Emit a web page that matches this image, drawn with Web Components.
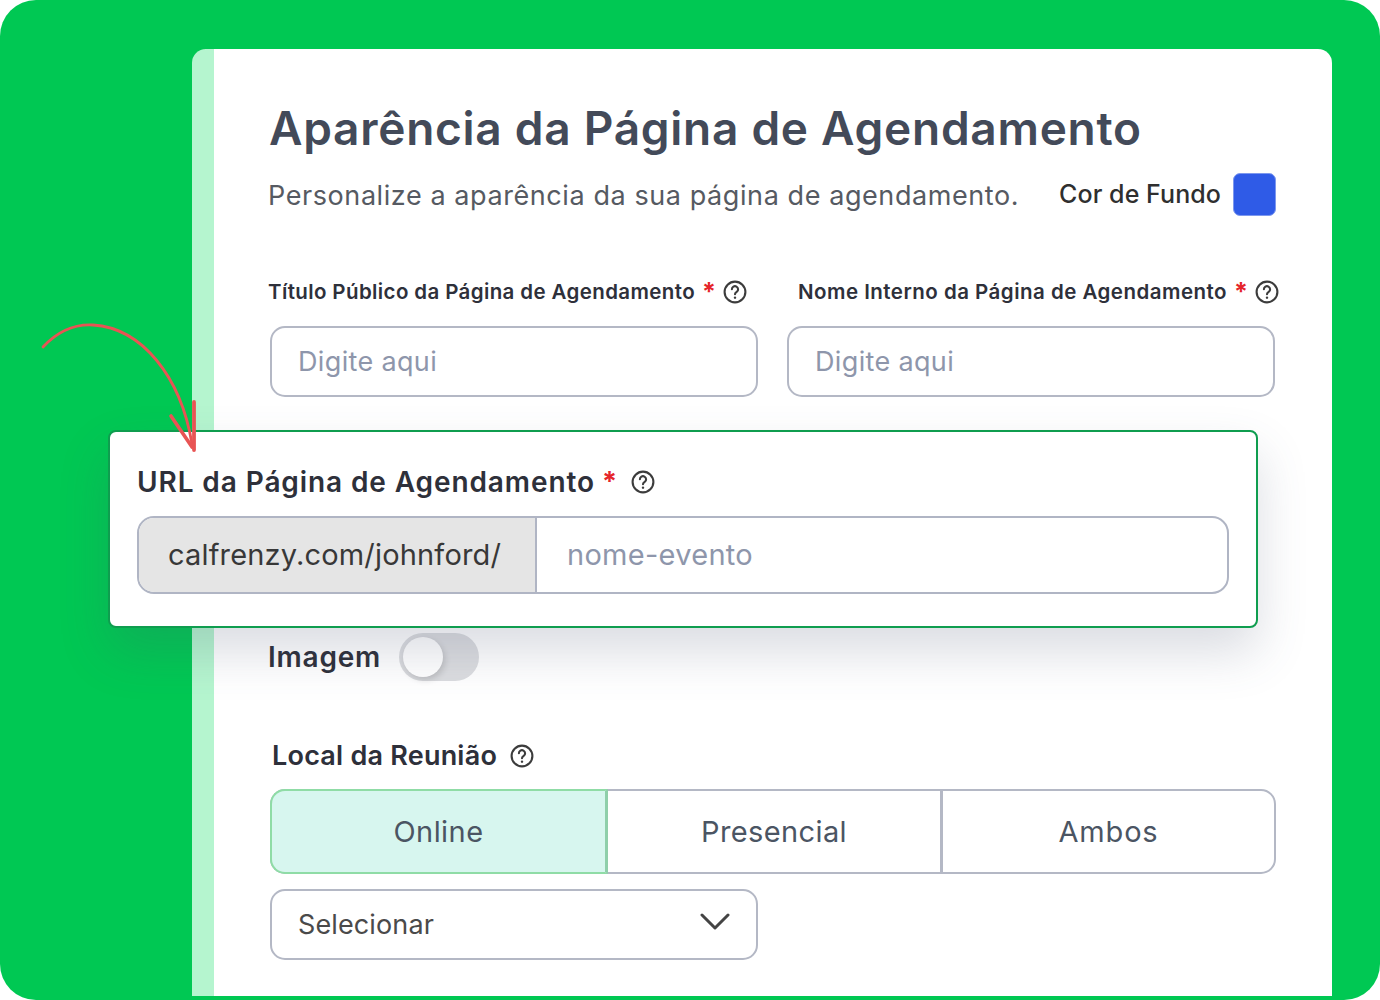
<!doctype html>
<html lang="pt">
<head>
<meta charset="utf-8">
<style>
html,body{margin:0;background:#fff}
body{font-family:Inter,"Liberation Sans",sans-serif}
</style>
</head>
<body>
<app-stage>
  <schedule-card></schedule-card>
  <url-popup slot="over"></url-popup>
  <curve-arrow slot="over"></curve-arrow>
</app-stage>
<script>
function mk(cls,tag){customElements.define(tag,cls)}
function shadow(el,html){el.attachShadow({mode:'open'}).innerHTML=html}

mk(class extends HTMLElement{connectedCallback(){shadow(this,`<style>
:host{display:block;position:relative;width:1380px;height:1000px;box-sizing:border-box;padding:49px 48px 4px 192px;background:#00C853;border-radius:36px;overflow:hidden}
</style><slot></slot><slot name="over"></slot>`)}},'app-stage');

mk(class extends HTMLElement{connectedCallback(){shadow(this,`<style>
:host{display:inline-flex;flex:none;width:24px;height:24px;color:#3c3c3c}
svg{width:100%;height:100%;display:block}
</style><svg viewBox="0 0 24 24" fill="none" stroke="currentColor" stroke-width="2.1" stroke-linecap="round" stroke-linejoin="round"><circle cx="12" cy="12" r="10.4"/><path d="M8.9 9.3a3.1 3.1 0 1 1 4.8 2.6c-1.1.7-1.7 1.3-1.7 2.4"/><path d="M12 17.6v.05" stroke-width="2.4"/></svg>`)}},'help-icon');

mk(class extends HTMLElement{connectedCallback(){
const size=this.getAttribute('size')||'20.5',ls=this.getAttribute('ls')||'0',starGap=this.getAttribute('star-gap')||'7',iconGap=this.getAttribute('icon-gap')||'7',starSize=this.getAttribute('star-size')||'25',starUp=this.getAttribute('star-up')||'0';
const star=this.hasAttribute('required')?`<span class="star">*</span>`:'';
shadow(this,`<style>
:host{display:inline-flex;align-items:center;flex:none;color:#2E303A}
.t{font:600 ${size}px/30px Inter,sans-serif;letter-spacing:${ls}px;white-space:nowrap}
.star{font:700 ${starSize}px/30px Inter,sans-serif;color:#E5252A;margin-left:${starGap}px;margin-top:-${starUp}px}
help-icon{margin-left:${iconGap}px}
</style><span class="t"><slot></slot></span>${star}<help-icon></help-icon>`)}},'field-label');

mk(class extends HTMLElement{connectedCallback(){shadow(this,`<style>
:host{display:flex;align-items:center;box-sizing:border-box;height:71px;padding-left:26px;border:2px solid #B4B8C5;border-radius:15px;background:#fff;color:#8E96AB;font:400 27px/30px Inter,sans-serif;letter-spacing:.35px}
</style><slot></slot>`)}},'text-field');

mk(class extends HTMLElement{connectedCallback(){shadow(this,`<style>
:host{display:inline-block;flex:none;width:80px;height:48px;box-sizing:border-box;padding:4px;border-radius:24px;background:#DCDDE0}
i{display:block;width:40px;height:40px;border-radius:50%;background:#fff;box-shadow:2px 3px 6px rgba(0,0,0,.14)}
</style><i></i>`)}},'toggle-switch');

mk(class extends HTMLElement{connectedCallback(){shadow(this,`<style>
:host{display:grid;grid-template-columns:336px 335px 1fr;height:85px;box-sizing:border-box;border:2px solid #B4B8C5;border-radius:15px;color:#4B5563;font:400 29px/30px Inter,sans-serif;position:relative}
div{display:flex;align-items:center;justify-content:center;border-right:3px solid #B4B8C5;white-space:nowrap}
.on{background:#D7F6EF;margin:-2px 0 -2px -2px;border:2px solid #8FDCA6;border-right-width:3px;border-radius:15px 0 0 15px;border-right-color:#8FCFAA}
div:last-child{border-right:0}
</style><div class="on" style="letter-spacing:.43px">Online</div><div style="letter-spacing:.39px">Presencial</div><div style="letter-spacing:.82px">Ambos</div>`)}},'segment-control');

mk(class extends HTMLElement{connectedCallback(){shadow(this,`<style>
:host{display:flex;align-items:center;justify-content:space-between;box-sizing:border-box;width:488px;height:71px;padding:0 26px 0 26px;border:2px solid #B4B8C5;border-radius:15px;color:#4a4a4a;font:400 27px/30px Inter,sans-serif;letter-spacing:.12px}
svg{width:30px;height:18px;margin-top:-5px;display:block}
</style><span><slot></slot></span><svg viewBox="0 0 30 18" fill="none" stroke="#444" stroke-width="3" stroke-linecap="round" stroke-linejoin="round"><path d="M2 2l13 13L28 2"/></svg>`)}},'select-box');

mk(class extends HTMLElement{connectedCallback(){shadow(this,`<style>
:host{display:flex;flex-direction:column;height:947px;box-sizing:border-box;border-left:22px solid #B5F5CF;border-radius:14px 14px 0 0;background:#fff;padding:49px 56px 0 54px}
h1{margin:0;font:600 46px/60px Inter,sans-serif;letter-spacing:.73px;color:#434A59;margin-left:1px}
.sub{display:flex;align-items:center;justify-content:space-between;height:43px;margin-top:15px}
.sub p{margin:2px 0 0;font:400 27px/32px Inter,sans-serif;letter-spacing:.58px;color:#565A62;white-space:nowrap}
.color{display:flex;align-items:center;gap:12px;font:500 25px/30px Inter,sans-serif;letter-spacing:.07px;color:#2f2f2f}
.color span{display:block;margin-top:-2px}
.color i{display:block;width:43px;height:43px;box-sizing:border-box;border-radius:7px;background:#2F5BE7;border:1px solid #7D98EE}
.labels{display:flex;gap:51px;margin-top:61px}
.inputs{display:grid;grid-template-columns:488px 488px;gap:29px;margin:19px 0 0 2px}
.img{display:flex;align-items:center;gap:18px;height:48px;margin-top:236px;font:600 28px/48px Inter,sans-serif;letter-spacing:.78px;color:#2E303A}
.local{margin:60px 0 0 4px;height:30px;display:flex}
segment-control{margin:18px 0 0 2px}
select-box{margin:15px 0 0 2px}
</style>
<h1>Aparência da Página de Agendamento</h1>
<div class="sub"><p>Personalize a aparência da sua página de agendamento.</p><div class="color"><span>Cor de Fundo</span><i></i></div></div>
<div class="labels">
  <field-label required ls=".38">Título Público da Página de Agendamento</field-label>
  <field-label required ls=".48">Nome Interno da Página de Agendamento</field-label>
</div>
<div class="inputs"><text-field>Digite aqui</text-field><text-field>Digite aqui</text-field></div>
<div class="img"><span>Imagem</span><toggle-switch></toggle-switch></div>
<div class="local"><field-label size="27" ls=".22" icon-gap="13">Local da Reunião</field-label></div>
<segment-control></segment-control>
<select-box>Selecionar</select-box>`)}},'schedule-card');

mk(class extends HTMLElement{connectedCallback(){shadow(this,`<style>
:host{position:absolute;left:108px;top:430px;width:1150px;height:198px;box-sizing:border-box;padding:35px 27px 0 27px;background:#fff;border:2px solid #0F9D4F;border-radius:8px;box-shadow:0 24px 50px rgba(70,80,110,.2);display:block}
.field{display:flex;height:78px;margin-top:19px;box-sizing:border-box;border:2px solid #B0B5C4;border-radius:17px;overflow:hidden}
.pre{width:398px;box-sizing:border-box;padding-left:29px;display:flex;align-items:center;background:#E5E5E5;border-right:2px solid #B0B5C4;color:#383838;font:400 29px/30px Inter,sans-serif;letter-spacing:.17px;white-space:nowrap}
.ph{padding-left:30px;display:flex;align-items:center;color:#8E96AB;font:400 29px/30px Inter,sans-serif;letter-spacing:.28px}
</style>
<field-label required size="28" ls=".9" star-size="27" icon-gap="14">URL da Página de Agendamento</field-label>
<div class="field"><div class="pre">calfrenzy.com/johnford/</div><div class="ph">nome-evento</div></div>`)}},'url-popup');

mk(class extends HTMLElement{connectedCallback(){shadow(this,`<style>
:host{position:absolute;left:40px;top:320px;width:160px;height:135px;display:block}
svg{width:100%;height:100%;display:block;overflow:visible}
</style><svg viewBox="40 320 160 135" fill="none" stroke="#E85454" stroke-linecap="round" stroke-linejoin="round"><path d="M43 347C58 331 76 324 93 325C142 328 181 377 192 444" stroke-width="2.8"/><path d="M171 416L192 447" stroke-width="3.6"/><path d="M194 402V450" stroke-width="3.8"/></svg>`)}},'curve-arrow');
</script>
</body>
</html>
